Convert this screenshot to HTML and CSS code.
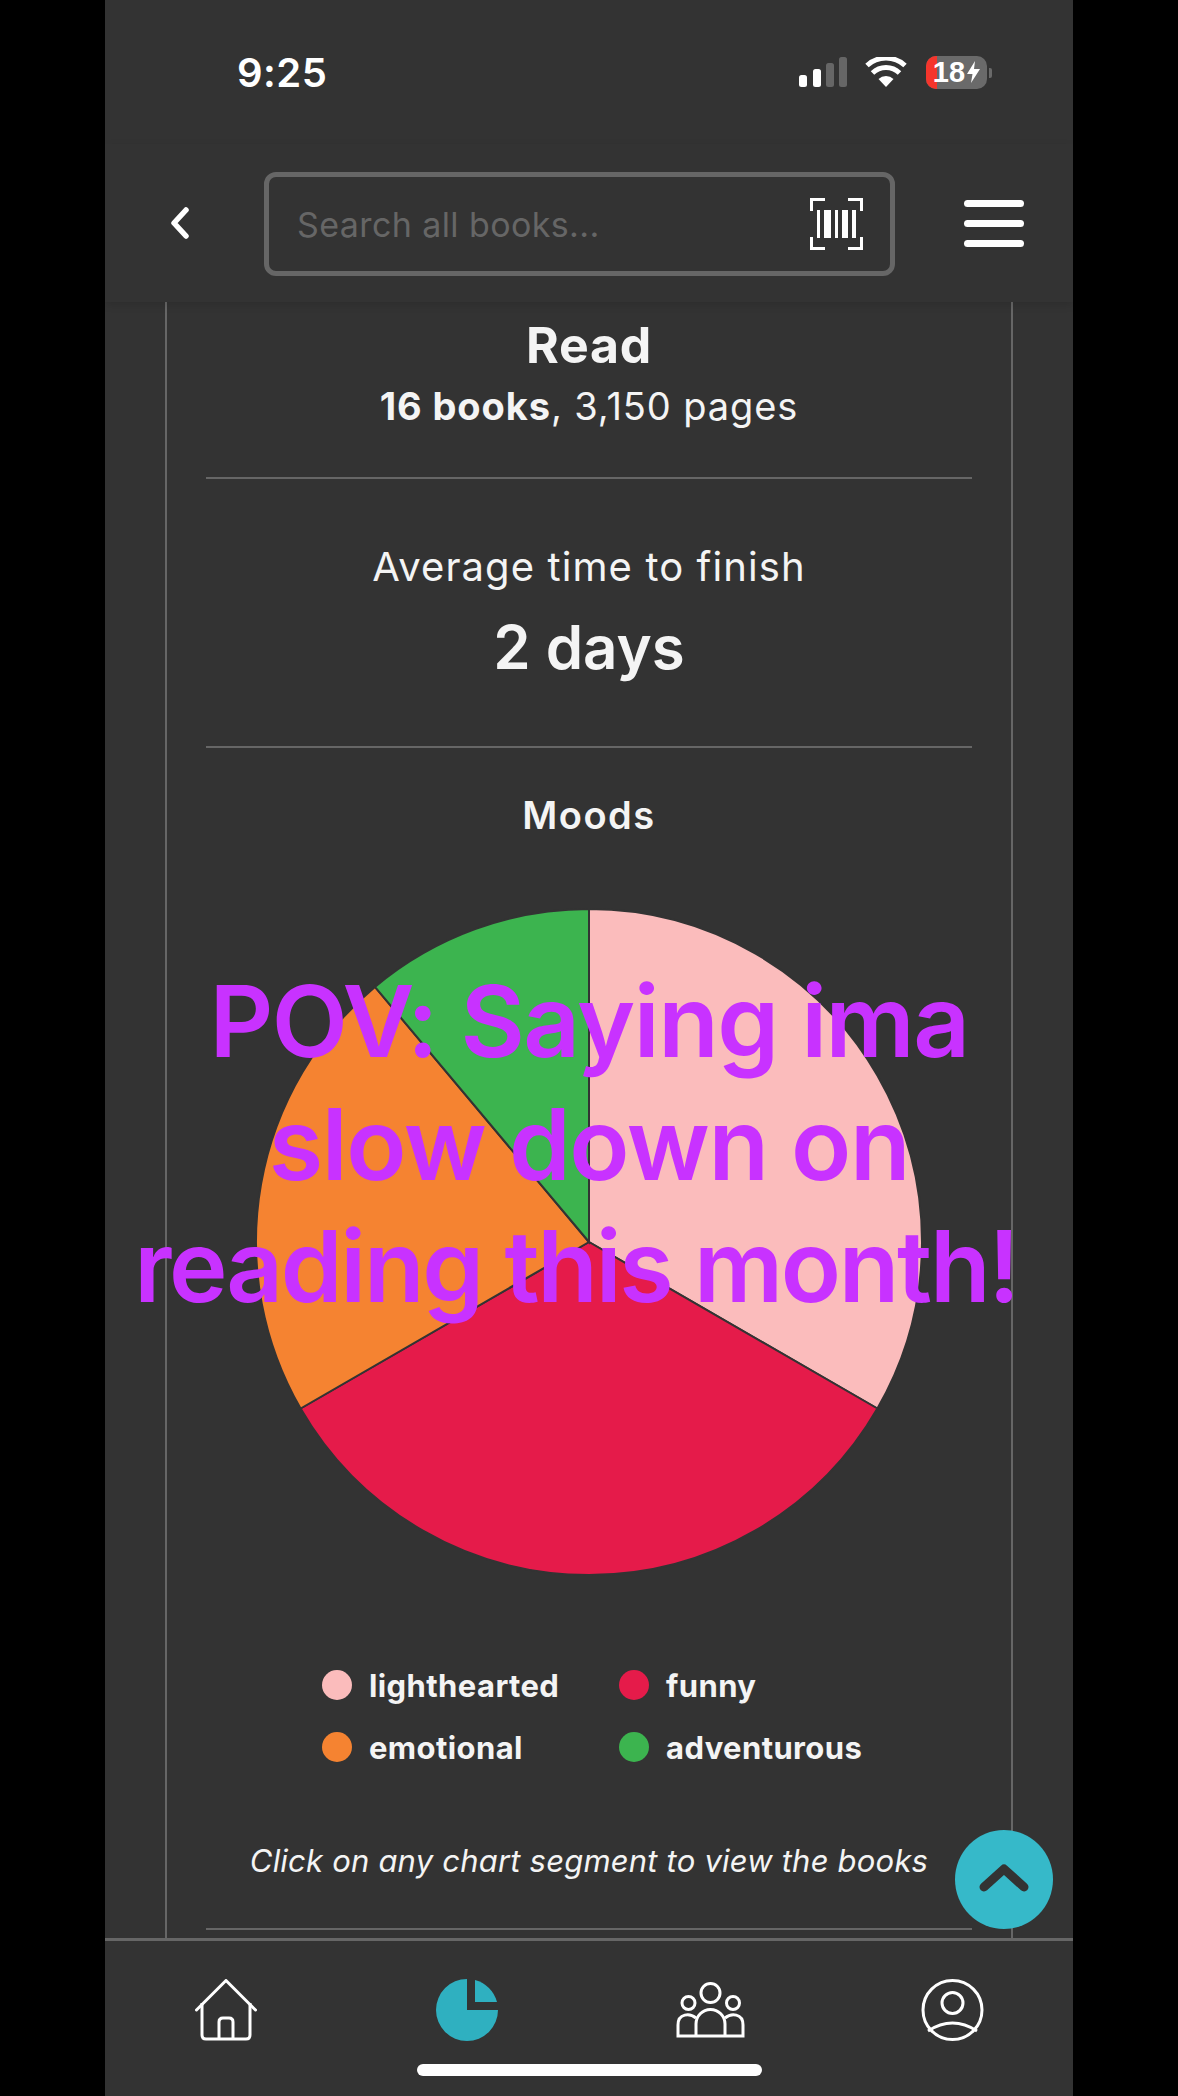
FILE: index.html
```html
<!DOCTYPE html>
<html lang="en">
<head>
<meta charset="utf-8">
<title>Reading stats</title>
<link rel="stylesheet" href="styles.css">
</head>
<body>
<div class="phone">
  <div class="status">
    <span class="time">9:25</span>
    <div class="status-icons">
      <svg class="signal" width="48" height="30" viewBox="0 0 48 30"><rect x="0" y="18" width="8" height="12" rx="2.5" fill="#fff"/><rect x="14" y="12" width="8" height="18" rx="2.5" fill="#fff"/><rect x="27" y="6" width="8" height="24" rx="2.5" fill="#666"/><rect x="40" y="0" width="8" height="30" rx="2.5" fill="#666"/></svg>
      <svg class="wifi" width="42" height="30" viewBox="0 0 42 30"><path d="M21 30 L13.5 22 A11 11 0 0 1 28.5 22 Z" fill="#fff"/><path d="M7.5 16 A19.5 19.5 0 0 1 34.500 16" fill="none" stroke="#fff" stroke-width="5"/><path d="M2 8.500 A28 28 0 0 1 40 8.500" fill="none" stroke="#fff" stroke-width="5"/></svg>
      <div class="battery">
        <span class="battery-fill"></span>
        <span class="battery-num">18</span>
        <svg class="bolt" width="13" height="22" viewBox="0 0 13 22"><path d="M8 0 L0 13 H5.500 L4 22 L13 8 H7 Z" fill="#fff"/></svg>
        <span class="battery-tip"></span>
      </div>
    </div>
  </div>
  <header class="header">
    <svg class="back" width="20" height="32" viewBox="0 0 20 32"><path d="M16 3 L4 16 L16 29" fill="none" stroke="#fff" stroke-width="5.500" stroke-linecap="round" stroke-linejoin="round"/></svg>
    <div class="search">
      <span class="placeholder">Search all books...</span>
      <svg class="barcode" width="53" height="52" viewBox="0 0 53 52">
        <path d="M1.500 13 V1.500 H15 M38 1.500 H51.500 V13 M1.500 39 V50.500 H15 M38 50.500 H51.500 V39" fill="none" stroke="#fff" stroke-width="3"/>
        <path d="M7 12 H10 V40 H7 Z M14 12 H21 V40 H14 Z M25 12 H28 V40 H25 Z M32 12 H38 V40 H32 Z M42 12 H46 V40 H42 Z" fill="#fff"/>
      </svg>
    </div>
    <div class="burger"><span></span><span></span><span></span></div>
  </header>
  <main class="content">
    <h2 class="read-title">Read</h2>
    <p class="read-sub"><strong>16 books</strong>, 3,150 pages</p>
    <hr class="rule rule-first">
    <p class="avg-label">Average time to finish</p>
    <p class="avg-value">2 days</p>
    <hr class="rule rule-second">
    <h3 class="moods">Moods</h3>
    <svg class="pie" width="668" height="668" viewBox="-334 -334 668 668">
      <g stroke="#333" stroke-width="2">
        <path d="M0 0 L0 -333 A333 333 0 0 1 288.390 166.500 Z" fill="#fbbcbc"/>
        <path d="M0 0 L288.390 166.500 A333 333 0 0 1 -288.390 166.500 Z" fill="#e51b4a"/>
        <path d="M0 0 L-288.390 166.500 A333 333 0 0 1 -214.050 -255.100 Z" fill="#f58331"/>
        <path d="M0 0 L-214.050 -255.100 A333 333 0 0 1 0 -333 Z" fill="#3cb44f"/>
      </g>
    </svg>
    <ul class="legend">
      <li class="legend-item"><span class="dot dot-pink"></span>lighthearted</li>
      <li class="legend-item"><span class="dot dot-red"></span>funny</li>
      <li class="legend-item"><span class="dot dot-orange"></span>emotional</li>
      <li class="legend-item"><span class="dot dot-green"></span>adventurous</li>
    </ul>
    <p class="note">Click on any chart segment to view the books</p>
    <hr class="rule rule-last">
  </main>
  <nav class="tabbar">
    <div class="tabs">
      <svg class="tab" width="62" height="62" viewBox="0 0 62 62"><path d="M1.500 31 L31 1.500 L60.500 31" fill="none" stroke="#fff" stroke-width="3" stroke-linecap="round" stroke-linejoin="round"/><path d="M7 24 V56 Q7 60 11 60 H51 Q55 60 55 56 V24 M24 60 V43 Q24 39 28 39 H34 Q38 39 38 43 V60" fill="none" stroke="#fff" stroke-width="3"/></svg>
      <svg class="tab tab-pie" width="62" height="62" viewBox="0 0 62 62"><path d="M31 31 H62 A31 31 0 1 1 31 0 Z" fill="#2fb0c0"/><path d="M39 1 A31 31 0 0 1 61 23 H39 Z" fill="#2fb0c0"/></svg>
      <svg class="tab" width="69" height="56" viewBox="0 0 69 56"><g fill="none" stroke="#fff" stroke-width="3"><circle cx="34.500" cy="11" r="9.500"/><circle cx="12.500" cy="21" r="6.500"/><circle cx="57" cy="21" r="6.500"/><path d="M20 54 V42 A14.500 14.500 0 0 1 49 42 V54"/><path d="M20 36 C14 31 2 31 2 43 V54 M49 36 C55 31 67 31 67 43 V54 M0.500 54 H68.500"/></g></svg>
      <svg class="tab tab-profile" width="63" height="62" viewBox="0 0 63 62"><g fill="none" stroke="#fff" stroke-width="3"><circle cx="31.500" cy="31" r="29.500"/><circle cx="31.500" cy="24" r="10.500"/><path d="M7 52 Q31.500 36 56 52"/></g></svg>
    </div>
    <div class="home-bar"></div>
  </nav>
  <div class="overlay"><span class="line line-one">POV: Saying ima</span><span class="line line-two">slow down on</span><span class="line line-three">reading this month!</span></div>
  <button class="fab" type="button" aria-label="Back to top"><svg width="50" height="30" viewBox="0 0 50 30"><path d="M5 24 L25 6 L45 24" fill="none" stroke="#333" stroke-width="9" stroke-linecap="round" stroke-linejoin="round"/></svg></button>
</div>
</body>
</html>
```
FILE: styles.css
```css
* { box-sizing: border-box; }
html, body { margin: 0; padding: 0; background: #000; }
body { font-family: Inter, "Open Sans", sans-serif; color: #f4f4f4; }
.phone { position: relative; width: 968px; height: 2096px; margin: 0 auto; background: #333; display: flex; flex-direction: column; overflow: hidden; }

.status { height: 144px; flex: none; display: flex; align-items: center; justify-content: space-between; padding: 0 86px 0 132px; }
.time { font-size: 40px; font-weight: 600; color: #fff; letter-spacing: 0.5px; }
.status-icons { display: flex; align-items: center; gap: 18px; }
.wifi { margin-right: 1px; }
.battery { position: relative; width: 61px; height: 33px; border-radius: 10px; background: #6a6a6a; display: flex; align-items: center; justify-content: center; gap: 2px; }
.battery-fill { position: absolute; left: 0; top: 0; bottom: 0; width: 11px; background: #f5352c; border-radius: 10px 0 0 10px; }
.battery-num { position: relative; font-family: "Liberation Sans", sans-serif; font-size: 29px; font-weight: 700; color: #fff; }
.bolt { position: relative; }
.battery-tip { position: absolute; right: -5px; top: 12px; width: 3px; height: 10px; background: #6a6a6a; border-radius: 0 2px 2px 0; }

.header { height: 158px; flex: none; display: flex; align-items: center; padding: 0 49px 0 65px; position: relative; z-index: 1; background: #333; box-shadow: 0 3px 8px rgba(0,0,0,.12); }
.search { width: 631px; height: 104px; margin-left: 74px; margin-top: 2px; border: 5px solid #666; border-radius: 12px; display: flex; align-items: center; justify-content: space-between; padding: 0 27px 0 28px; }
.placeholder { font-size: 34px; letter-spacing: 0.4px; color: #666; }
.burger { margin-left: auto; display: flex; flex-direction: column; gap: 13px; }
.burger span { display: block; width: 60px; height: 7px; border-radius: 4px; background: #fff; }

.content { flex: 1; margin: 0 60px; padding: 18px 39px 0; border-left: 2px solid #666; border-right: 2px solid #666; text-align: center; min-height: 0; }
.read-title { margin: 0; font-size: 50px; font-weight: 700; line-height: 50px; letter-spacing: 0.8px; }
.read-sub { margin: 14px 0 0; font-size: 38px; line-height: 44px; font-weight: 400; letter-spacing: 0.9px; }
.read-sub strong { font-weight: 700; }
.rule { border: 0; height: 2px; margin: 0; background: #666; }
.rule-first { margin-top: 49px; }
.avg-label { margin: 66px 0 0; font-size: 40px; line-height: 44px; letter-spacing: 1.1px; }
.avg-value { margin: 23px 0 0; font-size: 60px; line-height: 70px; font-weight: 600; }
.rule-second { margin-top: 64px; }
.moods { margin: 45px 0 0; font-size: 38px; line-height: 44px; font-weight: 600; letter-spacing: 1.5px; }
.pie { display: block; margin: 71px auto 0; }
.legend { list-style: none; margin: 89px 0 0 116px; padding: 0; display: grid; grid-template-columns: 297px 1fr; row-gap: 22px; text-align: left; }
.legend-item { display: flex; align-items: center; gap: 17px; height: 40px; font-size: 31px; font-weight: 700; letter-spacing: 0.4px; }
.dot { width: 30px; height: 30px; border-radius: 50%; flex: none; }
.dot-pink { background: #fbbcbc; }
.dot-red { background: #e51b4a; }
.dot-orange { background: #f58331; }
.dot-green { background: #3cb44f; }
.note { margin: 74px 0 0; font-size: 31px; line-height: 40px; font-style: italic; letter-spacing: 0.2px; }
.rule-last { margin-top: 47px; }

.tabbar { height: 158px; flex: none; border-top: 3px solid #666; background: #333; position: relative; z-index: 1; }
.tabs { display: flex; align-items: center; gap: 178px; padding: 38px 0 0 90px; height: 100px; }
.tab { display: block; flex: none; }
.tab-pie { margin-left: 1px; }
.tab-profile { margin-left: -2px; }
.home-bar { width: 345px; height: 12px; margin: 23px auto 0; background: #fff; border-radius: 6px; }

.overlay { position: absolute; left: 0; right: 0; top: 960px; z-index: 2; font-size: 99px; line-height: 122.500px; font-weight: 600; color: #c832ff; text-align: center; white-space: nowrap; }
.line { display: block; }
.line-one { letter-spacing: -1.5px; }
.line-two { letter-spacing: -1.4px; }
.line-three { letter-spacing: -2.3px; margin-left: -26px; }
.fab { position: absolute; left: 850px; top: 1830px; z-index: 3; width: 98px; height: 99px; border: 0; padding: 0; border-radius: 50%; background: #36b9c9; display: flex; align-items: center; justify-content: center; }
.fab svg { display: block; margin-top: -4px; }
```
